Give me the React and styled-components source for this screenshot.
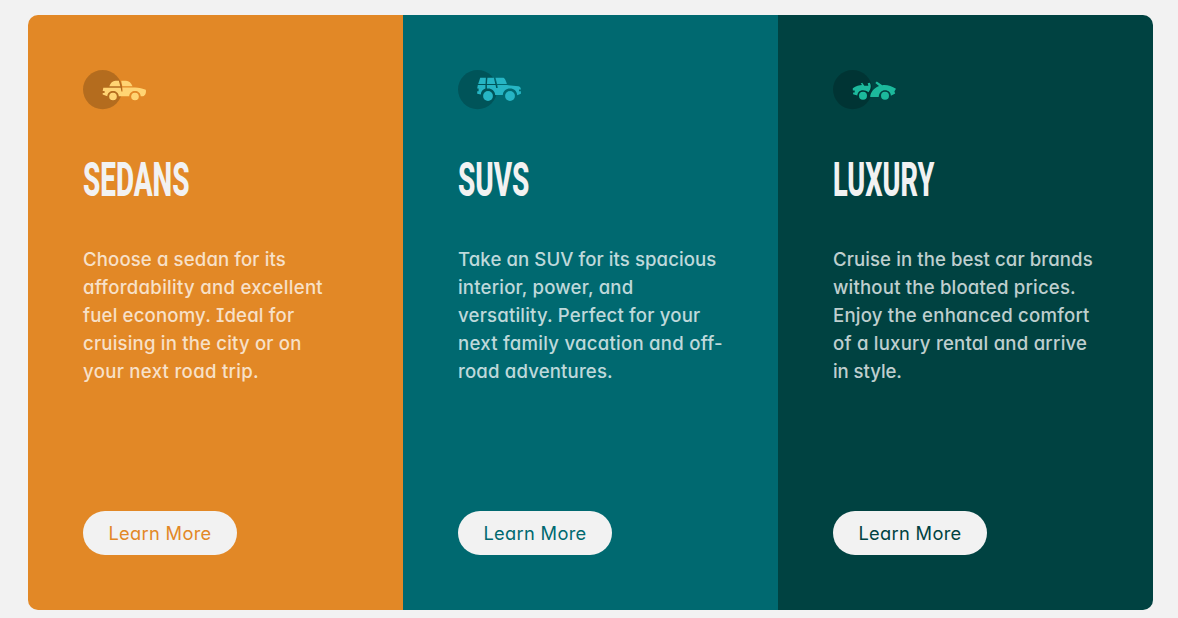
import React from "react";
import styled, { createGlobalStyle } from "styled-components";

const GlobalStyle = createGlobalStyle`
  * { box-sizing: border-box; }
  body {
    margin: 0;
    background: #f2f2f2;
    font-family: Inter, "Liberation Sans", sans-serif;
    font-feature-settings: "cv11", "cv08";
  }
`;

const Page = styled.main`
  height: 618px;
  padding: 15px 25px 8px 28px;
`;

const Cards = styled.div`
  display: grid;
  grid-template-columns: repeat(3, minmax(0, 1fr));
  height: 595px;
  border-radius: 10px;
  overflow: hidden;
`;

const Card = styled.section`
  display: flex;
  flex-direction: column;
  align-items: flex-start;
  padding: 55px;
  background: ${(p) => p.$color};
`;

const Icon = styled.svg`
  display: block;
  flex: none;
  width: 64px;
  height: 40px;
`;

const Title = styled.h2`
  height: 56px;
  margin: 42px 0 37px;
  color: #f2f2f2;
  font-family: Roboto, "Liberation Sans", sans-serif;
  font-size: 48.5px;
  font-weight: 800;
  line-height: 56px;
  text-transform: uppercase;
  white-space: nowrap;
  transform: scaleX(${(p) => p.$stretch});
  transform-origin: left center;
`;

const Copy = styled.p`
  margin: 0;
  color: rgba(255, 255, 255, 0.75);
  font-size: 18.6px;
  font-weight: 450;
  line-height: 28px;
`;

const Line = styled.span`
  display: block;
  white-space: nowrap;
  letter-spacing: ${(p) => p.$track}px;
`;

const Button = styled.button`
  width: 154px;
  height: 44px;
  margin-top: auto;
  padding: 0;
  border: 0;
  border-radius: 22px;
  background: #f2f2f2;
  color: ${(p) => p.$color};
  font: inherit;
  font-feature-settings: inherit;
  font-size: 18.3px;
  letter-spacing: 0.3px;
`;

const SedanIcon = () => (
  <Icon viewBox="0 0 64 40">
    <circle cx="19.6" cy="19.6" r="19.6" fill="#000" opacity=".2" />
    <g fill="#ffd473">
      <path d="M26.3 16.3C27.5 13 29.5 10.7 32.5 10.7H35.8L37.3 16.3Z" />
      <path d="M38.2 10.7H43C46.2 10.7 48 13 49.5 16.3H39.3Z" />
      <path d="M20.3 17.8H37.7L38.4 21.5H39.7L39.3 17.6H52C56 17.8 60 18.7 62.8 19.7C63.4 22.5 62.5 25.6 60 26.2H57.7C57.4 23.1 55 21.1 52 21.1S46.5 23.1 46.2 26.2H35.8C35.5 23.1 33 21.1 30 21.1S24.6 23.1 24.3 26.2L19.7 24.6V22.9H21.6V21H19.7Z" />
      <circle cx="30" cy="26.5" r="3.8" />
      <circle cx="52" cy="26.5" r="3.8" />
    </g>
  </Icon>
);

const SuvIcon = () => (
  <Icon viewBox="0 0 64 40">
    <circle cx="19.6" cy="19.6" r="19.6" fill="#000" opacity=".2" />
    <g fill="#26b5c4">
      <path d="M22.2 7.8H27.9L27.5 13.9H20.2Z" />
      <path d="M29.4 7.8H35.8L37.4 13.9H28.9Z" />
      <path d="M37.5 7.8H44.8C46.8 7.8 47.8 10.5 48.8 13.9H39.1Z" />
      <path d="M19.8 15.1H27.4V18.6C24.5 19.6 23 21.7 22.8 24.5L19.2 23.7V21.3H20.6V18.5H19.2Z" />
      <path d="M28.9 15.1H37.6L38.2 18H39.8L39.3 15.1H49L60.5 16.3C62.3 16.7 62.9 18 62.9 19.5H61V21.3H62.9V23.7L59.2 25.2C59 21 56 18.5 52 18.5S45.1 21.1 44.8 25H37.2C36.9 21 34 18.5 30 18.5H28.9Z" />
      <circle cx="30" cy="26" r="4.9" />
      <circle cx="52" cy="26" r="4.9" />
    </g>
  </Icon>
);

const LuxuryIcon = () => (
  <Icon viewBox="0 0 64 40">
    <circle cx="19.6" cy="19.6" r="19.6" fill="#000" opacity=".2" />
    <g fill="#1cb99c">
      <path d="M19.8 18.3C23 15.9 26.4 15.1 29.1 15L27.7 13.4L29.2 12.8L31.3 15.8H35.4L34.7 13.3L36.8 12.8C38.1 14.8 38 17.6 37 19.8L35.5 22.3C34 20.9 32 20.2 30 20.2C26.6 20.2 24.5 22.3 24.3 25.6L20.1 24.2V22.5H21.7V20.6H19.8Z" />
      <path d="M42.3 12.9L43.8 11.6L49.3 15.2C54 14.4 58.5 16.3 63 18.8L61.4 21.5L62.2 23.4L57.9 25.7C57.8 22.4 55.3 20.2 52 20.2S46.1 22.5 45.7 26.9H37.2C37.3 23 40 18.5 46 15.9Z" />
      <circle cx="30" cy="25.7" r="4" />
      <circle cx="52" cy="25.7" r="4" />
    </g>
  </Icon>
);

const cars = [
  {
    title: "Sedans",
    color: "#e28826",
    icon: SedanIcon,
    stretch: 0.575,
    lines: [
      ["Choose a sedan for its", 0.11],
      ["affordability and excellent", 0.28],
      ["fuel economy. Ideal for", 0.16],
      ["cruising in the city or on", 0.18],
      ["your next road trip.", 0.29],
    ],
  },
  {
    title: "SUVs",
    color: "#006970",
    icon: SuvIcon,
    stretch: 0.575,
    lines: [
      ["Take an SUV for its spacious", 0.08],
      ["interior, power, and", 0.18],
      ["versatility. Perfect for your", 0.19],
      ["next family vacation and off-", 0.25],
      ["road adventures.", 0.15],
    ],
  },
  {
    title: "Luxury",
    color: "#004241",
    icon: LuxuryIcon,
    stretch: 0.56,
    lines: [
      ["Cruise in the best car brands", 0.08],
      ["without the bloated prices.", 0.18],
      ["Enjoy the enhanced comfort", 0.21],
      ["of a luxury rental and arrive", 0.22],
      ["in style.", -0.07],
    ],
  },
];

export default function App() {
  return (
    <Page>
      <GlobalStyle />
      <Cards>
        {cars.map(({ title, color, icon: CarIcon, stretch, lines }) => (
          <Card key={title} $color={color}>
            <CarIcon />
            <Title $stretch={stretch}>{title}</Title>
            <Copy>
              {lines.map(([text, track]) => (
                <Line key={text} $track={track}>{text} </Line>
              ))}
            </Copy>
            <Button $color={color}>Learn More</Button>
          </Card>
        ))}
      </Cards>
    </Page>
  );
}
